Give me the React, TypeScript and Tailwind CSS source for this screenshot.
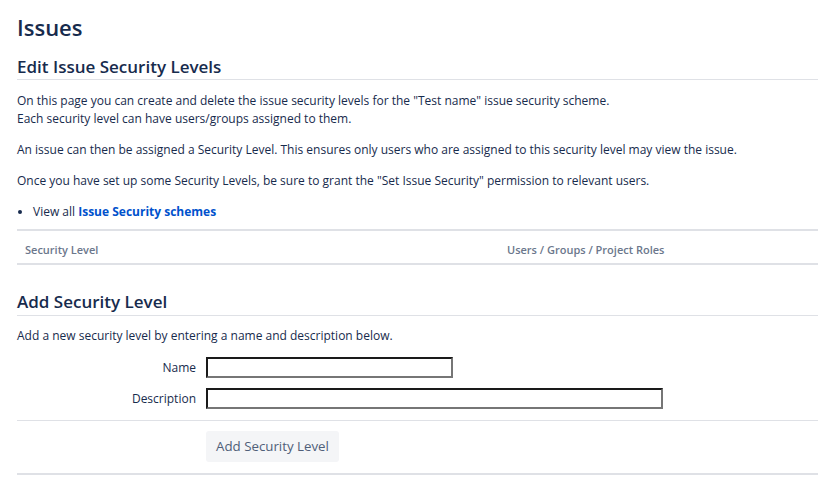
export default function App() {
  return (
    <div className="min-h-screen bg-white pl-[17px] text-[#172b4d] font-['Open_Sans',sans-serif]">
      <h1 className="pt-[13px] text-[22px] leading-[28px] font-semibold">Issues</h1>

      <h2 className="mt-[15px] text-[17px] leading-[22px] font-semibold border-b border-[#dfe1e6] pb-[1px]">
        Edit Issue Security Levels
      </h2>

      <div className="text-[12px] leading-[18px] pt-[12px]">
        <p>
          On this page you can create and delete the issue security levels for the "Test name" issue security scheme.
          <br />
          Each security level can have users/groups assigned to them.
        </p>
        <p className="mt-[13px]">
          An issue can then be assigned a Security Level. This ensures only users who are assigned to this security level may view the issue.
        </p>
        <p className="mt-[13px]">
          Once you have set up some Security Levels, be sure to grant the "Set Issue Security" permission to relevant users.
        </p>
        <ul className="mt-[13px] list-disc pl-[16px]">
          <li>
            View all <a className="font-bold text-[#0052cc]">Issue Security schemes</a>
          </li>
        </ul>
      </div>

      <div className="mt-[8px] border-t-2 border-b-2 border-[#dfe1e6] flex h-[36px] items-end pb-[5px] text-[11px] font-semibold text-[#6b778c]">
        <div className="w-[490px] pl-[8px]">Security Level</div>
        <div>Users / Groups / Project Roles</div>
      </div>

      <h2 className="mt-[26px] text-[17px] leading-[22px] font-semibold border-b border-[#dfe1e6] pb-[2px]">
        Add Security Level
      </h2>

      <p className="text-[12px] leading-[18px] pt-[11px]">
        Add a new security level by entering a name and description below.
      </p>

      <div className="mt-[12px] flex flex-col gap-[10px] text-[12px]">
        <div className="flex items-center">
          <label className="w-[189px] text-right pr-[10px]">Name</label>
          <input className="h-[21px] w-[247px] border-2 border-t-[#1a1a1a] border-l-[#1a1a1a] border-b-[#767676] border-r-[#767676] outline-none" />
        </div>
        <div className="flex items-center">
          <label className="w-[189px] text-right pr-[10px]">Description</label>
          <input className="h-[21px] w-[457px] border-2 border-t-[#1a1a1a] border-l-[#1a1a1a] border-b-[#767676] border-r-[#767676] outline-none" />
        </div>
      </div>

      <div className="mt-[11px] border-t border-b-2 border-[#dfe1e6] pt-[10px] pb-[11px] pl-[189px]">
        <button className="h-[31px] px-[10px] rounded-[3px] bg-[#f4f5f7] text-[#505f79] text-[13.3px]">
          Add Security Level
        </button>
      </div>
    </div>
  );
}
